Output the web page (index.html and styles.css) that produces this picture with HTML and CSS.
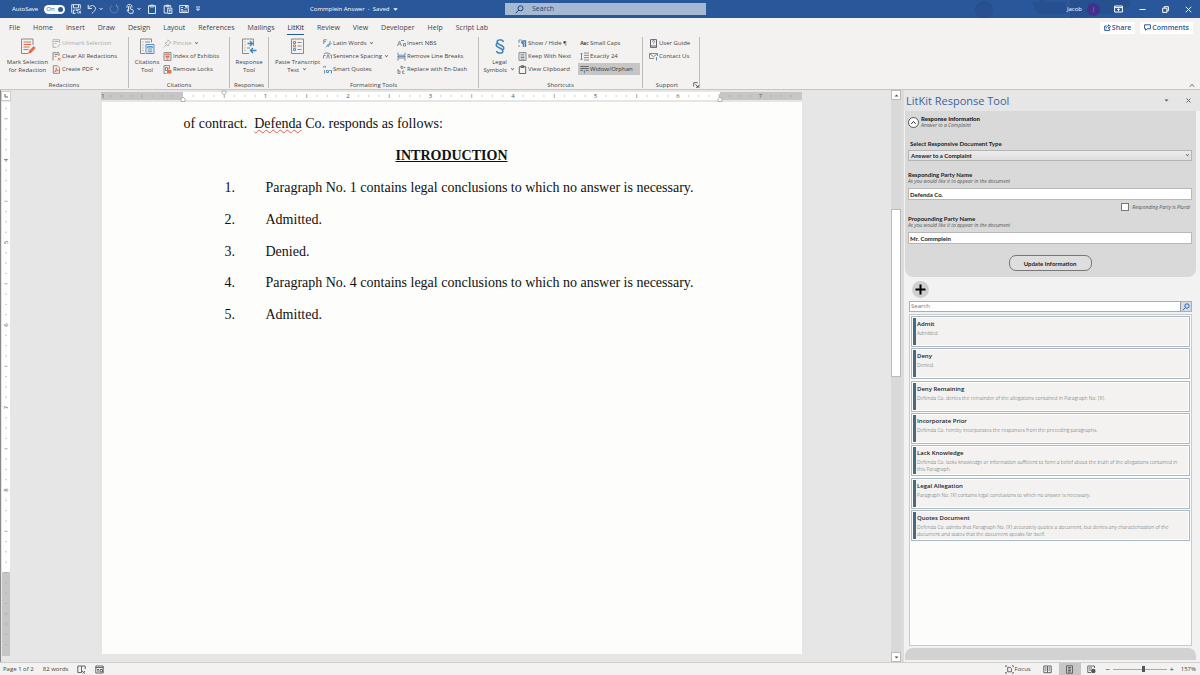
FILE: index.html
```
<!DOCTYPE html>
<html lang="en">
<head>
<meta charset="utf-8">
<title>Commplein Answer - Saved</title>
<link rel="stylesheet" href="styles.css">
</head>
<body>
<header class="titlebar">
  <div class="quick">
    <span class="autosave">AutoSave</span>
    <button class="toggle" aria-label="AutoSave on">On<i></i></button>
    <button aria-label="Save"><svg width="10" height="10" viewBox="0 0 10 10"><path d="M.7.7h8.600v4M.7.7v7.600l1 1h3M2.500.9v3h5v-3M2.500 9V6h2M9.500 6.300A2 2 0 0 0 6 6.600M5.800 5v1.800h1.800M5.800 8A2 2 0 0 0 9.300 8M9.600 9.500V7.800H8"/></svg></button>
    <button class="wide" aria-label="Undo"><svg width="10" height="10" viewBox="0 0 10 10"><path d="M1.200.8v3.700h3.700M1.300 4.400C3 1.400 6 1 7.600 2.500c2 2 .6 4-2.800 7"/></svg><svg width="4" height="4" viewBox="0 0 4 4"><path d="M.5 1 2 2.700 3.500 1"/></svg></button>
    <button class="dim" aria-label="Redo"><svg width="10" height="10" viewBox="0 0 10 10"><path d="M3 1.500a4 4 0 1 0 4.500.3M7.500 0v2.500h2"/></svg></button>
    <button class="wide" aria-label="Touch mode"><svg width="10" height="10" viewBox="0 0 10 10"><path d="M3.500 7V2.600a1 1 0 0 1 1.800 0V5l2.500.8c.7.4.6 1.200 0 3.500H4.500L2 6.300l.6-.5L3.500 7M2 3.800A2.600 2.600 0 1 1 7 3.500"/></svg><svg width="4" height="4" viewBox="0 0 4 4"><path d="M.5 1 2 2.700 3.500 1"/></svg></button>
    <button aria-label="Paste"><svg width="10" height="10" viewBox="0 0 10 10"><path d="M1.500 1.700h7v7.800h-7zM3.200 1.200h3.600v1.700H3.200z"/></svg></button>
    <button aria-label="Paste text"><svg width="10" height="10" viewBox="0 0 10 10"><path d="M4 9H1.200V1.700h6.500V3.500M3 1.200h3v1.500H3zM4.700 4.200h4.200v5.300H4.700zM5.700 6h2.200M6.800 6v2.500"/></svg></button>
    <button aria-label="Document view"><svg width="10" height="10" viewBox="0 0 10 10"><path d="M.7 1.500h8.600v7H.7zM2 3.500h2M2 5.500h2M2 7h6M5.500 5l2.500-2.500M6 2.500h2v2"/></svg></button>
    <button aria-label="Customize toolbar"><svg width="6" height="6" viewBox="0 0 6 6"><path d="M1 1h4M1.500 3h3L3 4.700z"/></svg></button>
  </div>
  <div class="doc-title">Commplein Answer&nbsp; - &nbsp;Saved <svg width="5" height="5" viewBox="0 0 5 5"><path class="fill" d="M.3 1.300h4.400L2.500 3.700z"/></svg></div>
  <label class="search"><svg width="9" height="9" viewBox="0 0 9 9"><circle cx="5.500" cy="3.300" r="2.500"/><path d="M3.700 5.100.7 8.200"/></svg><input type="text" placeholder="Search" aria-label="Search"></label>
  <div class="account">
    <svg class="art" width="210" height="18" viewBox="0 0 210 18"><circle cx="44" cy="10" r="9"/><circle cx="102" cy="7" r="7"/><path d="M92 2h34v12H98zM130 0h60v6l-18 8h-20l-22 4z"/><circle cx="144" cy="9" r="9"/></svg>
    <span>Jacob</span><span class="avatar">J</span>
    <button aria-label="Ribbon display options"><svg width="9" height="8" viewBox="0 0 9 8"><path d="M.6 1h7.800v6H.6zM.6 2.600h7.800M4.500 6.300V3.800M3.300 4.900l1.200-1.200 1.200 1.200"/></svg></button>
    <button aria-label="Minimize"><svg width="7" height="7" viewBox="0 0 7 7"><path d="M.5 3.500h6"/></svg></button>
    <button aria-label="Restore"><svg width="7" height="7" viewBox="0 0 7 7"><path d="M.7 2.200h4.200v4.200H.7zM2.200 2V.7h4.200v4.200H5"/></svg></button>
    <button aria-label="Close"><svg width="7" height="7" viewBox="0 0 7 7"><path d="m.8.800 5.400 5.400M6.200.8.8 6.200"/></svg></button>
  </div>
</header>

<nav class="tabs">
  <a href="#">File</a><a href="#">Home</a><a href="#">Insert</a><a href="#">Draw</a><a href="#">Design</a><a href="#">Layout</a><a href="#">References</a><a href="#">Mailings</a><a href="#" class="active">LitKit</a><a href="#">Review</a><a href="#">View</a><a href="#">Developer</a><a href="#">Help</a><a href="#">Script Lab</a>
  <div class="share">
    <button><svg width="7" height="7" viewBox="0 0 7 7"><path d="M2.500 2H.7v4.400h5V4.500M2.200 4.500C2.500 2.800 3.500 2 4.500 2V.8l2 1.900-2 1.800V3.300"/></svg>Share</button>
    <button><svg width="7" height="7" viewBox="0 0 7 7"><path d="M.6.8h5.800v4H3L1.600 6.300V4.800h-1z"/></svg>Comments</button>
  </div>
</nav>

<section class="ribbon">
  <div class="group g-redact">
    <div class="cmds">
      <button class="big"><svg width="16" height="17" viewBox="0 0 16 17"><path class="g" d="M13 7V1H1.500v14.500H8"/><path class="o" d="M3.500 4h7.500M3.500 6.500h7.500M3.500 9h6M3.500 11.500h5"/><path class="ofill" d="m8.200 15.800.8-3 4.700-4.800 2 2-4.600 4.900z"/></svg>Mark Selection<br>for Redaction</button>
      <div class="col">
        <button class="off"><svg viewBox="0 0 9 9"><path class="g" d="M1 .7h6.500V4M1 .7v7.600h3M2.500 2.500h4M2.500 4.300h2M5 8.500 8.500 5"/></svg>Unmark Selection</button>
        <button><svg viewBox="0 0 9 9"><path class="g" d="M1 8.500V.7h6V4M2.500 2.500H6M2.500 4.300h2"/><path class="o" d="m6 6 2.500 2.500M8.500 6 6 8.500"/></svg>Clear All Redactions</button>
        <button><svg viewBox="0 0 9 9"><path class="g" d="M1.300 8.300V.7h4l2.200 2v5.600z"/><path class="o" d="M2.700 7C4 5.500 4.500 4 4.200 2.800 4 5 5.500 5.700 6.500 5.600 5 5.500 3.500 6 2.700 7z"/></svg>Create PDF <b class="dd"></b></button>
      </div>
    </div>
    <h2>Redactions</h2>
  </div>
  <div class="group g-cite">
    <div class="cmds">
      <button class="big"><svg width="16" height="17" viewBox="0 0 16 17"><path class="g" d="M12.500 4.500V1H1.500v14.500H6M3.500 4h1M6 4h5M3.500 7h1M3.500 10h1M3.500 12.500h1"/><path class="bl" d="M7 6.500h8v9H7zM8.700 8.500h4.600v1.500H8.700zM8.700 12h4.600M8.700 13.800h4.600"/></svg>Citations<br>Tool</button>
      <div class="col">
        <button class="off"><svg viewBox="0 0 9 9"><path class="g" d="m5 .8 3 3-1 .3-1.500 1.500-.3 1.500L2 4l1.500-.3L5 2.200zM3.500 5.500.8 8.300"/></svg>Pincite <b class="dd"></b></button>
        <button><svg viewBox="0 0 9 9"><path class="g" d="M1 .6h7v8H1z"/><path class="o" d="M2.300 2h4.400v1H2.300zM2.500 4.500h4M2.500 5.800h4M3.500 7.200h2"/></svg>Index of Exhibits</button>
        <button><svg viewBox="0 0 9 9"><path class="g" d="M3.500 8.400H1V.6h5.500V3M2.500 2.500h2v3h-2z"/><path class="ofill" d="M4 5h4.500v3.500H4z"/><path class="o" d="M5 5V3.800c.3-1 2-1 2.300 0"/></svg>Remove Locks</button>
      </div>
    </div>
    <h2>Citations</h2>
  </div>
  <div class="group g-resp">
    <div class="cmds">
      <button class="big"><svg width="16" height="17" viewBox="0 0 16 17"><path class="g" d="M12.500 8V1H1.500v14.500H8M3.500 4h1M3.500 7h1M3.500 10h1M3.500 12.500h1M6 10h3"/><path class="bl2" d="M6.500 5.500h5M9 3l2.500 2.500L9 8M15.500 12.500h-6M12 10l-2.500 2.500L12 15"/></svg>Response<br>Tool</button>
    </div>
    <h2>Responses</h2>
  </div>
  <div class="group g-format">
    <div class="cmds">
      <button class="big"><svg width="16" height="17" viewBox="0 0 16 17"><path class="g" d="M1.500 1h12v14.500h-12zM7.500 4.500h4M7.500 8h4M7.500 11.500h4"/><path class="bl" d="M3.500 3.500h2v2h-2zM3.500 10.500h2v2h-2z"/><path class="o" d="M3.500 7h2v2h-2z"/></svg>Paste Transcript<br>Text <b class="dd"></b></button>
      <div class="col">
        <button><svg viewBox="0 0 9 9"><path class="g" d="M.8 5V.8h3M.8 2.600h2M5 8 7.500 2"/><path class="bl" d="M3 8.300 5.500 5M6 6.500 8.500 4"/></svg>Latin Words <b class="dd"></b></button>
        <button><svg viewBox="0 0 9 9"><path class="g" d="M.5 6.500v-3h2M3.500 6.500 5 2.500l1.500 4M7 3h1.500v3.500"/><path class="bl" d="M1 2C2.500.6 5 .6 7 2"/></svg>Sentence Spacing <b class="dd"></b></button>
        <button><svg viewBox="0 0 9 9"><path class="g" d="M.8.800v2M2.300.8v2M1.500 5v3.500"/><path class="bl" d="M3.500 5.500h2v2h-2zM6.500 5.500h2v3"/></svg>Smart Quotes</button>
      </div>
      <div class="col">
        <button><svg viewBox="0 0 9 9"><path class="g" d="M.5 7 2.500 2l2 5M1.300 5h2.400M6.500 4.500h2V7h-2z"/><path class="bl" d="M4 1.500h3"/></svg>Insert NBS</button>
        <button><svg viewBox="0 0 9 9"><path class="g" d="M1 .5v2.700h7V.5M1 8.700V6h7v2.700"/><path class="bl" d="M.5 4.600h8M2 3.500.7 4.600 2 5.700M7 3.500l1.300 1.100L7 5.700"/></svg>Remove Line Breaks</button>
        <button><svg viewBox="0 0 9 9"><path class="g" d="M1 4v4.500h2V6H1M7.500 6H5.700v2.500h1.800M4 .7v2.600h2V1.600H4M7 2.500h1.500"/></svg>Replace with En-Dash</button>
      </div>
    </div>
    <h2>Formatting Tools</h2>
  </div>
  <div class="group g-short">
    <div class="cmds">
      <button class="big"><svg width="16" height="17" viewBox="0 0 16 17"><path class="bl2" d="M11.500 4C10.500 1 5 1.200 5 4c0 3 6.800 3 6.800 6 0 1.300-1 2-2.300 2M4.500 13c1 3 6.500 2.800 6.500 0 0-3-6.800-3-6.800-6 0-1.300 1-2 2.300-2"/></svg>Legal<br>Symbols <b class="dd"></b></button>
      <div class="col">
        <button><svg viewBox="0 0 9 9"><path class="g" d="M1 4V1h2.500M1 6v2"/><path class="bl2" d="M5.500 8V3M7.500 8V2H5a1.200 1.200 0 0 0 0 2.500"/></svg>Show / Hide ¶</button>
        <button><svg viewBox="0 0 9 9"><path class="g" d="M1 .6h7v8H1zM2.500 2.200h4M2.500 7.200h4"/><path class="bl" d="M2.500 4h4M2.500 5.500h4"/></svg>Keep With Next</button>
        <button><svg viewBox="0 0 9 9"><path class="dk" d="M1.300 1.700h6.400v6.800H1.300zM3 .8h3v1.700H3z"/></svg>View Clipboard</button>
      </div>
      <div class="col">
        <button><span class="abc">A<small>BC</small></span>Small Caps</button>
        <button><svg viewBox="0 0 9 9"><path class="g" d="M4 1h5M4 3.300h5M4 5.600h5M4 8h5"/><path class="bl" d="M1.500 1v7M.4 2.200 1.500 1l1.100 1.200M.4 6.800 1.500 8l1.100-1.200"/></svg>Exactly 24</button>
        <button class="on"><svg viewBox="0 0 9 9"><path class="dk" d="M.3 1.500h8.400M.3 3.500h8.400M.3 5.300h2.700M6 5.300h2.700"/><path class="bl" d="M4.500 8.500V5.500M3.500 6.300l1-1 1 1"/></svg>Widow/Orphan</button>
      </div>
    </div>
    <h2>Shortcuts</h2>
  </div>
  <div class="group g-support">
    <div class="cmds">
      <div class="col">
        <button><svg viewBox="0 0 9 9"><path class="dk" d="M1.500.6h6v8h-6zM1.500 7h6"/><path class="pu" d="M3.500 2.500c0-1.300 2-1.300 2 0 0 1-1 1-1 2"/></svg>User Guide</button>
        <button><svg viewBox="0 0 9 9"><path class="g" d="M.5 1.500h8V4M.5 1.500v5H5M.6 1.700l3.900 3 3.900-3"/><path class="bl" d="M7.500 5v3.500"/></svg>Contact Us</button>
      </div>
    </div>
    <h2>Support</h2>
    <button class="launch" aria-label="Support options"><svg width="6" height="6" viewBox="0 0 6 6"><path class="dk" d="M.7 4.500V.7h4M2.500 2.500l2.700 2.700M5.300 3v2.300H3"/></svg></button>
  </div>
  <button class="collapse" aria-label="Collapse ribbon"><svg width="6" height="5" viewBox="0 0 6 5"><path class="dk" d="m.7 3.700 2.300-2.200 2.300 2.200"/></svg></button>
</section>

<main class="work">
  <div class="editor">
    <div class="hruler">
      <span class="corner"><svg width="4" height="4" viewBox="0 0 4 4"><path class="dk" d="M1 0v3h3"/></svg></span>
      <svg id="hr" width="701" height="11" viewBox="0 0 701 11"></svg>
    </div>
    <div class="canvas">
      <svg id="vr" width="9" height="554" viewBox="0 0 9 554"></svg>
      <article class="page">
        <p>of contract.&nbsp; <span class="misspelt">Defenda</span> Co. responds as follows:</p>
        <h1>INTRODUCTION</h1>
        <ol>
          <li><span>1.</span>Paragraph No. 1 contains legal conclusions to which no answer is necessary.</li>
          <li><span>2.</span>Admitted.</li>
          <li><span>3.</span>Denied.</li>
          <li><span>4.</span>Paragraph No. 4 contains legal conclusions to which no answer is necessary.</li>
          <li><span>5.</span>Admitted.</li>
        </ol>
      </article>
    </div>
  </div>
  <div class="scroll">
    <button aria-label="Scroll up"><svg width="5" height="5" viewBox="0 0 5 5"><path class="dkfill" d="M.5 3.500h4l-2-2z"/></svg></button>
    <div class="track"><div class="thumb"></div></div>
    <button aria-label="Scroll down"><svg width="5" height="5" viewBox="0 0 5 5"><path class="dkfill" d="M.5 1.500h4l-2 2z"/></svg></button>
  </div>
  <aside class="pane">
    <div class="pane-head">
      <h2>LitKit Response Tool</h2>
      <button aria-label="Pane options"><svg width="5" height="5" viewBox="0 0 5 5"><path class="dkfill" d="M.5 1.500h4l-2 2z"/></svg></button>
      <button aria-label="Close pane"><svg width="5" height="5" viewBox="0 0 5 5"><path class="dk" d="m.5.5 4 4M4.500.5l-4 4"/></svg></button>
    </div>
    <div class="pane-body">
      <form class="info">
        <div class="info-head">
          <button type="button" class="fold" aria-label="Collapse"><svg width="7" height="5" viewBox="0 0 7 5"><path d="M1.300 3.800 3.500 1.500l2.200 2.300"/></svg></button>
          <div><strong>Response Information</strong><em>Answer to a Complaint</em></div>
        </div>
        <label class="inset" for="type">Select Responsive Document Type</label>
        <div class="select"><select id="type"><option>Answer to a Complaint</option></select><b class="dd"></b></div>
        <label class="field" for="resp">Responding Party Name<em>As you would like it to appear in the document</em></label>
        <input id="resp" type="text" value="Defenda Co.">
        <label class="plural"><input type="checkbox"><em>Responding Party is Plural</em></label>
        <label class="field" for="prop">Propounding Party Name<em>As you would like it to appear in the document</em></label>
        <input id="prop" type="text" value="Mr. Commplein">
        <button type="button" class="update">Update Information</button>
      </form>
      <button class="add" aria-label="Add response"><svg width="11" height="11" viewBox="0 0 11 11"><path d="M5.500.5v10M.5 5.500h10"/></svg></button>
      <div class="find"><input type="text" placeholder="Search" aria-label="Search responses"><button aria-label="Find"><svg width="8" height="8" viewBox="0 0 8 8"><circle cx="5" cy="3" r="2.200"/><path d="M3.300 4.700.8 7.200"/></svg></button></div>
      <div class="list">
        <ul>
          <li><h3>Admit</h3><p>Admitted.</p></li>
          <li><h3>Deny</h3><p>Denied.</p></li>
          <li><h3>Deny Remaining</h3><p>Defenda Co. denies the remainder of the allegations contained in Paragraph No. [X].</p></li>
          <li><h3>Incorporate Prior</h3><p>Defenda Co. hereby incorporates the responses from the preceding paragraphs.</p></li>
          <li><h3>Lack Knowledge</h3><p>Defenda Co. lacks knowledge or information sufficient to form a belief about the truth of the allegations contained in<br>this Paragraph.</p></li>
          <li><h3>Legal Allegation</h3><p>Paragraph No. [X] contains legal conclusions to which no answer is necessary.</p></li>
          <li><h3>Quotes Document</h3><p>Defenda Co. admits that Paragraph No. [X] accurately quotes a document, but denies any characterization of the<br>document and states that the document speaks for itself.</p></li>
        </ul>
      </div>
      <div class="foot"></div>
    </div>
  </aside>
</main>

<footer class="status">
  <span>Page 1 of 2</span><span>82 words</span>
  <button aria-label="Proofing"><svg width="9" height="9" viewBox="0 0 9 9"><path class="dk" d="M4.500 7.500H.8V1h3.700zM4.500 1h3.700v3M5 6l3 2.500M8 6 5.500 8.500"/></svg></button>
  <button aria-label="Macro"><svg width="9" height="9" viewBox="0 0 9 9"><path class="dk" d="M.8 1h7.400v7H.8zM.8 2.500h7.400M2 4.500h2M2 6h2M5 4.500h2.500v2.300H5z"/></svg></button>
  <div class="views">
    <button class="focus"><svg width="9" height="9" viewBox="0 0 9 9"><path class="dk" d="M2 .8H.7V2M7 .8h1.300V2M2 8.200H.7V7M7 8.200h1.300V7M2.700 2.300h2.500l1.200 1.200v3.300H2.700z"/></svg>Focus</button>
    <button aria-label="Read mode"><svg width="9" height="9" viewBox="0 0 9 9"><path class="dk" d="M.8 1h3.700v6.700H.8zM4.500 1h3.700v6.700H4.500zM1.800 3h1.700M1.800 5h1.700M5.500 3h1.700M5.500 5h1.700"/></svg></button>
    <button class="on" aria-label="Print layout"><svg width="9" height="9" viewBox="0 0 9 9"><path class="dk" d="M1.500.8h6v7.500h-6zM3 2.500h3M3 4h3M3 5.500h3M3 7h3"/></svg></button>
    <button aria-label="Web layout"><svg width="9" height="9" viewBox="0 0 9 9"><path class="dk" d="M4 7.500H.8V1h6.700v2M2 3h3M2 5h2"/><circle class="dkfill" cx="6.300" cy="6" r="2.300"/></svg></button>
    <button class="zoomb" aria-label="Zoom out">−</button>
    <input type="range" min="0" max="100" value="57" aria-label="Zoom">
    <button class="zoomb" aria-label="Zoom in">+</button>
    <span>157%</span>
  </div>
</footer>
<script src="rulers.js"></script>
</body>
</html>
```
FILE: styles.css
```
* { box-sizing: border-box; margin: 0; padding: 0; }
body {
  height: 100vh; display: flex; flex-direction: column; overflow: hidden;
  font: 6px/8px "Open Sans", "Noto Sans", sans-serif; color: #444; background: #e6e6e6;
}
button, input, select { font: inherit; color: inherit; background: none; border: 0; border-radius: 0; outline: 0; }
button { display: flex; align-items: center; justify-content: center; white-space: nowrap; }
a { color: inherit; text-decoration: none; }
svg { flex: none; display: block; fill: none; stroke: currentColor; stroke-width: 1; }
.dd { display: inline-block; width: 3px; height: 3px; border: solid #666; border-width: 0 1px 1px 0; transform: scale(.8) rotate(45deg); margin: 0 2px 2px; }

.g { stroke: #8a8a8a; } .dk { stroke: #666; } .o { stroke: #e0704a; } .ofill { fill: #e0704a; stroke: none; }
.bl { stroke: #5590c4; } .bl2 { stroke: #3f83c0; stroke-width: 1.4; } .pu { stroke: #8a5aa8; }
.dkfill { fill: #555; stroke: none; }

.titlebar { flex: none; height: 18px; display: flex; align-items: center; background: #2a579a; color: #fff; }
.quick { width: 310px; padding-left: 12px; display: flex; align-items: center; gap: 6px; }
.quick .autosave { width: 32px; margin-right: -6px; }
.quick svg { opacity: .85; }
.quick .wide { gap: 2px; }
.quick .dim { opacity: .3; }
.toggle { width: 21px; height: 9px; gap: 3px; border-radius: 5px; background: #fff; color: #2a579a; }
.toggle i { width: 5px; height: 5px; border-radius: 50%; background: #2a579a; }
.doc-title { width: 195px; display: flex; align-items: center; gap: 4px; white-space: nowrap; }
.fill { fill: #fff; stroke: none; }
.search { width: 201px; height: 12px; display: flex; align-items: center; gap: 8px; padding-left: 10px; background: #a6b9d3; color: #1f4479; font-size: 7px; }
.search input { flex: 1; min-width: 0; }
.search input::placeholder { color: #1f4479; opacity: 1; }
.account { position: relative; flex: 1; height: 100%; display: flex; align-items: center; justify-content: flex-end; padding-right: 8px; }
.account > * { position: relative; }
.account .art { position: absolute; right: 50px; top: 0; fill: #1d4379; stroke: none; opacity: .3; }
.avatar { width: 13px; height: 13px; margin: 0 14px 0 5px; border-radius: 50%; background: #40318d; color: #9d86cf; text-align: center; line-height: 13px; }
.account button { margin-left: 16px; }
.account .avatar + button { margin-left: 0; }

.tabs { flex: none; height: 19px; display: flex; align-items: center; gap: 1px; padding-left: 3px; background: #f3f2f1; font-size: 7px; line-height: 12px; }
.tabs a { padding: 0 6px; }
.tabs .active { padding: 0; margin: 0 6px; color: #222; box-shadow: 0 1px #2a579a; }
.share { margin-left: auto; padding-right: 7px; display: flex; gap: 5px; }
.share button { height: 12px; padding: 0 4px; gap: 1px; background: #fff; border-radius: 1px; color: #2a579a; font-size: 7px; font-weight: 600; }

.ribbon { flex: none; height: 53px; display: flex; background: #f3f2f1; border-bottom: 1px solid #c6c6c6; }
.group { position: relative; height: 51px; border-right: 1px solid #bdbdbd; display: flex; flex-direction: column; justify-content: space-between; }
.group h2 { font-size: 6px; font-weight: 400; text-align: center; line-height: 6px; }
.cmds { display: flex; align-items: flex-start; }
.big { display: block; line-height: 8px; padding-top: 1px; }
.big svg { margin: 0 auto 3px; }
.col { display: flex; flex-direction: column; gap: 1px; }
.col button { height: 12px; gap: 1px; justify-content: flex-start; }
.col svg { width: 9px; height: 9px; }
.col .off { color: #aaa; }
.off svg { opacity: .6; }
.col .on { background: #c8c6c4; margin: 0 -2px 0 -2px; padding: 0 4px 0 2px; color: #333; }
.abc { width: 9px; font-size: 5px; font-weight: 700; } .abc small { font-size: 4px; }
.g-redact { width: 129px; } .g-redact .big { width: 52px; padding-left: 3px; }
.g-cite { width: 101px; } .g-cite .big { width: 34px; padding-left: 2px; }
.g-resp { width: 39px; } .g-resp .big { width: 38px; }
.g-format { width: 210px; } .g-format .big { width: 54px; padding-left: 3px; } .g-format .col { width: 74px; }
.g-short { width: 164px; } .g-short .big { width: 39px; padding-left: 2px; } .g-short .col + .col { margin-left: 4px; } .g-short .col { width: 58px; }
.g-support { width: 57px; } .g-support .col { padding-left: 6px; } .g-support h2 { padding-right: 8px; }
.launch { position: absolute; right: 0; bottom: 0; }
.collapse { margin-left: auto; align-self: flex-end; padding: 0 5px 1px 0; }

.work { flex: 1; min-height: 0; display: flex; }
.editor { flex: 1; min-width: 0; display: flex; flex-direction: column; border-left: 1px solid #888; }
.hruler { flex: none; height: 12px; display: flex; align-items: center; }
.corner { width: 10px; height: 10px; margin-right: 1px; background: #fff; border: 1px solid #ccc; display: flex; align-items: center; justify-content: center; }
.hruler > svg { margin: 0 auto; overflow: visible; }
.canvas { flex: 1; min-height: 0; display: flex; align-items: flex-start; padding-bottom: 8px; }
.canvas > svg { margin: 0 1px; }
.page { width: 700px; align-self: stretch; margin: 0 auto; padding: 6px 82px; background: #fdfdfc; color: #111; font: 14px/32px "Liberation Serif", "Times New Roman", serif; }
.page h1 { font-size: 14px; text-align: center; text-decoration: underline; }
.page ol { list-style: none; min-height: 158px; display: flex; flex-direction: column; justify-content: space-between; line-height: 31px; }
.page li { padding-left: 41px; display: flex; white-space: nowrap; }
.page li span { width: 41px; }
.misspelt { text-decoration: underline wavy #ea5f58 1px; text-underline-offset: 1px; text-decoration-skip-ink: none; }

.scroll { width: 10px; display: flex; flex-direction: column; background: #d9d9d9; }
.scroll button { height: 10px; background: #fff; border: 1px solid #bbb; }
.track { flex: 1; padding-top: 109px; }
.thumb { height: 168px; background: #fff; border: 1px solid #bbb; }

.pane { width: 299px; display: flex; flex-direction: column; border-left: 3px solid #dcdcdc; background: #e6e6e6; color: #222; font-size: 5px; line-height: 7px; }
.pane-head { height: 21px; display: flex; align-items: center; padding: 0 9px 0 2px; gap: 17px; }
.pane-head h2 { margin-right: auto; font-size: 11px; line-height: 14px; font-weight: 400; color: #3a639f; }
.pane-body { flex: 1; min-height: 0; display: flex; flex-direction: column; padding: 0 4px 2px 1px; background: #f2f2f2; }
.pane em { display: block; font: italic 400 5px/7px "Open Sans", sans-serif; color: #555; }
.info { display: flex; flex-direction: column; padding: 4px 4px 6px 3px; background: #d9d9d9; border-radius: 0 0 8px 8px; font: 700 6px/7px Lato, "Open Sans", sans-serif; }
.info-head { display: flex; align-items: center; gap: 2px; margin-bottom: 11px; }
.fold { width: 11px; height: 11px; border: 1px solid #555; border-radius: 50%; background: #fff; }
.inset { padding-left: 2px; }
.select { position: relative; margin: 3px 0 10px; }
.select select { width: 100%; height: 11px; padding-left: 2px; appearance: none; border: 1px solid #b4b4b4; background: linear-gradient(#ececec, #dedede); display: block; }
.select .dd { position: absolute; right: 3px; top: 3px; margin: 0; }
.info > input { height: 12px; padding: 0 1px; background: #fff; border: 1px solid #b8b8b8; }
.field { padding-bottom: 3px; }
.plural { display: flex; align-items: center; justify-content: flex-end; gap: 3px; padding: 3px 2px 4px; }
.plural input { appearance: none; width: 8px; height: 8px; border: 1px solid #777; background: #fff; }
.update { align-self: center; width: 83px; height: 16px; margin-top: 11px; border: 1px solid #777; border-radius: 7px; background: #dedede; }
.add { width: 17px; height: 17px; margin: 4px 0 3px 7px; flex: none; border-radius: 50%; background: #cfcfcf; color: #000; }
.add svg { stroke-width: 2; }
.find { flex: none; height: 11px; margin: 0 4px 2px; display: flex; border: 1px solid #abadb3; background: #fff; }
.find input { flex: 1; padding-left: 1px; font-size: 6px; }
.find button { width: 11px; background: #d5dbe4; border-left: 1px solid #999; color: #2d6cb5; }
.list { flex: 1; min-height: 0; margin: 0 4px; padding: 1px; background: #fcfcfb; border: 1px solid #c4ccd0; }
.list ul { list-style: none; display: flex; flex-direction: column; justify-content: space-between; min-height: 225px; }
.list li { height: 31px; padding: 3px 5px; border: 1px solid #a9b8c4; box-shadow: inset 0 0 0 1px #fff; background: linear-gradient(#466a82, #466a82) 1px 1px / 3px 27px no-repeat #f3f2f1; }
.list h3 { font-size: 6px; font-weight: 600; line-height: 8px; padding-bottom: 2px; }
.list p { font-weight: 300; color: #4c5c5c; white-space: nowrap; }
.foot { flex: none; height: 12px; margin-top: 2px; background: #d2d2d2; border-radius: 8px 8px 0 0; }

.status { flex: none; height: 13px; display: flex; align-items: center; gap: 9px; padding: 0 4px 0 3px; background: #f3f2f1; border-top: 1px solid #d0d0d0; }
.views { margin-left: auto; display: flex; align-items: center; height: 100%; }
.views button { width: 22px; height: 100%; }
.views .focus { width: auto; gap: 1px; margin-right: 6px; }
.views .on { background: #c8c6c4; }
.views .zoomb { width: 10px; font-size: 8px; }
.views input { appearance: none; width: 54px; height: 1px; background: #aaa; }
.views input::-webkit-slider-thumb { appearance: none; width: 3px; height: 6px; background: #555; }
.views span { margin-left: 4px; }
```
FILE: rulers.js
```
const NS = "http://www.w3.org/2000/svg";
const INCH = 82.5;

function add(svg, tag, attrs, text) {
  const el = document.createElementNS(NS, tag);
  for (const k in attrs) el.setAttribute(k, attrs[k]);
  if (text !== undefined) el.textContent = text;
  svg.append(el);
}

const textStyle = { fill: "#555", stroke: "none", "font-size": 6, "text-anchor": "middle" };

/* Horizontal ruler: margins are the grey ends. */
const h = document.getElementById("hr");
add(h, "rect", { x: 0, y: 1, width: 701, height: 8, fill: "#fff", stroke: "none" });
add(h, "rect", { x: 0, y: 1, width: 82, height: 8, fill: "#c6c6c6", stroke: "none" });
add(h, "rect", { x: 619, y: 1, width: 82, height: 8, fill: "#c6c6c6", stroke: "none" });
for (let i = -8; i < 60; i++) {
  const x = 82 + i * INCH / 8;
  if (i === 0) continue;
  if (i % 8 === 0) add(h, "text", { ...textStyle, x: Math.max(x, 2), y: 7 }, Math.abs(i / 8));
  else if (i % 4 === 0) add(h, "path", { d: `M${x} 3v4`, stroke: "#aaa" });
  else add(h, "path", { d: `M${x} 4.500v1`, stroke: "#999" });
}
const marker = { fill: "#fff", stroke: "#999", "stroke-width": 0.7 };
add(h, "path", { d: "M121 0h4v2l-2 2-2-2z", ...marker });
add(h, "path", { d: "M80 10.500V8l2-2 2 2v2.500z", ...marker });
add(h, "path", { d: "M617 10.500V8l2-2 2 2v2.500z", ...marker });

/* Vertical ruler: the page's bottom margin is grey. */
const v = document.getElementById("vr");
add(v, "rect", { x: 0, y: 0, width: 8, height: 470, fill: "#fff", stroke: "none" });
add(v, "rect", { x: 0, y: 470, width: 8, height: 84, fill: "#c6c6c6", stroke: "none" });
for (let i = -5; i < 48; i++) {
  const y = 58 + i * INCH / 8;
  if (i % 8 === 0 && i < 40) add(v, "text", { x: 0, y: 0, transform: `translate(6 ${y}) rotate(-90)`, ...textStyle }, 4 + i / 8);
  else if (i % 4 === 0) add(v, "path", { d: `M2.500 ${y}h3`, stroke: "#aaa" });
  else add(v, "path", { d: `M3.500 ${y}h1`, stroke: "#999" });
}
```
